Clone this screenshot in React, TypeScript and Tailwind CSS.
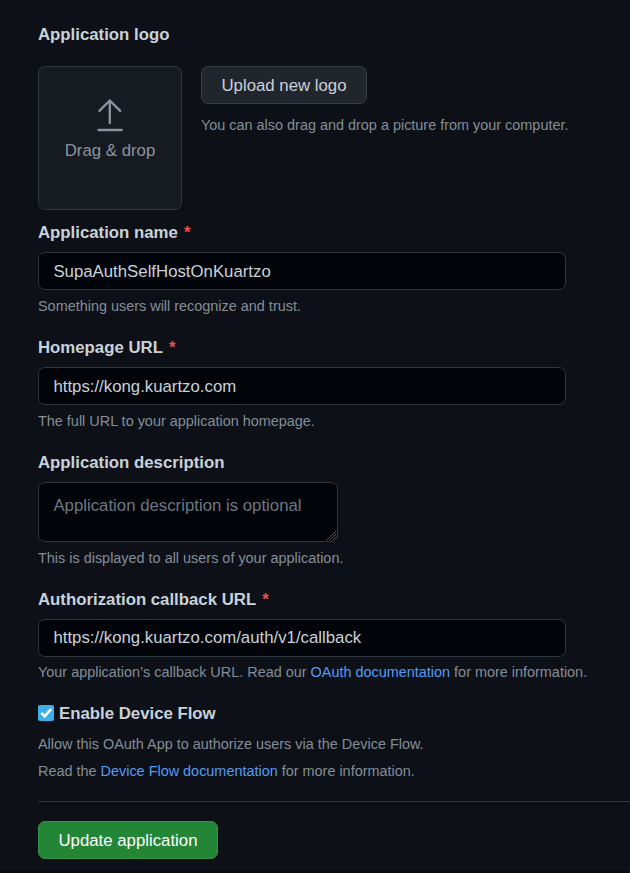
import type { ReactNode } from "react";

function Label({ children, required }: { children: ReactNode; required?: boolean }) {
  return (
    <label className="block h-[25px] text-[16.8px] leading-[25px] font-semibold text-[#c9d1d9]">
      {children}
      {required && <span className="pl-[6px] text-[#f0524a]">*</span>}
    </label>
  );
}

function Note({ children }: { children: ReactNode }) {
  return <p className="h-[22px] text-[14.43px] leading-[22px] whitespace-nowrap text-[#848d97]">{children}</p>;
}

function Field({ label, value, note, tight }: { label: string; value: string; note: ReactNode; tight?: boolean }) {
  return (
    <div>
      <Label required>{label}</Label>
      <input
        className={`mt-[7px] block h-[38px] w-[528px] rounded-[7px] border border-[#30363d] bg-[#010409] px-[14.4px] text-[16.8px] text-[#c9d1d9] outline-none ${tight ? "mb-[4px]" : "mb-[5px] pt-[2px]"}`}
        defaultValue={value}
      />
      <Note>{note}</Note>
    </div>
  );
}

function Link({ children }: { children: ReactNode }) {
  return (
    <a href="#" className="text-[#539bf5]">
      {children}
    </a>
  );
}

export default function App() {
  return (
    <main className="h-[873px] overflow-hidden border-b-2 border-[#090b10] bg-[#0d1117] pt-[22px] pl-[38px] font-['Liberation_Sans',Arial,sans-serif]">
      <Label>Application logo</Label>
      <div className="mt-[19px] flex gap-[19px]">
        <div className="flex size-[144px] flex-col items-center rounded-[7px] border border-[#30363d] bg-[#161b22] pt-[31px] text-[#8b949e]">
          <svg width="28" height="36" viewBox="0 0 28 36" fill="none" stroke="#8b919d" strokeWidth="2.4" strokeLinecap="round" strokeLinejoin="round">
            <path d="M13.8 25V2.5M3.4 12.9 13.8 2.5l10.4 10.4M2.5 32h23.2" />
          </svg>
          <span className="mt-[4px] text-[16.8px] leading-[25px]">Drag &amp; drop</span>
        </div>
        <div>
          <button className="block h-[38px] w-[166px] rounded-[7px] border border-[#363b42] bg-[#21262d] pt-[2px] text-[16.8px] text-[#c9d1d9]">
            Upload new logo
          </button>
          <div className="mt-[10px]">
            <Note>You can also drag and drop a picture from your computer.</Note>
          </div>
        </div>
      </div>

      <div className="mt-[10px] flex flex-col gap-[18px]">
        <Field label="Application name" value="SupaAuthSelfHostOnKuartzo" note="Something users will recognize and trust." />
        <Field label="Homepage URL" value="https://kong.kuartzo.com" note="The full URL to your application homepage." />
        <div>
          <Label>Application description</Label>
          <div className="relative mt-[7px] mb-[5px] w-[300px]">
            <textarea
              className="block h-[60px] w-[300px] resize-none rounded-[7px] border border-[#30363d] bg-[#010409] px-[14.4px] py-[9.6px] text-[16.8px] leading-[25.2px] text-[#c9d1d9] outline-none placeholder:text-[#6e7681]"
              placeholder="Application description is optional"
            />
            <svg className="absolute right-px bottom-px" width="11" height="11" viewBox="0 0 11 11" stroke="#5c6066" strokeWidth="0.9">
              <path d="M0.5 10.5l10-10M3.5 10.5l7-7M6.5 10.5l4-4" />
            </svg>
          </div>
          <Note>This is displayed to all users of your application.</Note>
        </div>
        <Field
          tight
          label="Authorization callback URL"
          value="https://kong.kuartzo.com/auth/v1/callback"
          note={
            <>
              Your application’s callback URL. Read our <Link>OAuth documentation</Link> for more information.
            </>
          }
        />
      </div>

      <div className="mt-[18px] flex items-center gap-[5px]">
        <svg className="mb-px" width="16" height="16" viewBox="0 0 16 16">
          <rect width="16" height="16" rx="2" fill="#3daee9" />
          <path d="M3.4 7.9 6.7 11.4 13.2 4" fill="none" stroke="#fff" strokeWidth="2.6" />
        </svg>
        <Label>Enable Device Flow</Label>
      </div>
      <div className="mt-[7px] flex flex-col gap-[5px]">
        <Note>Allow this OAuth App to authorize users via the Device Flow.</Note>
        <Note>
          Read the <Link>Device Flow documentation</Link> for more information.
        </Note>
      </div>

      <hr className="mt-[19px] border-t border-[#30363d]" />
      <button className="mt-[19px] block h-[38px] w-[180px] rounded-[7px] border border-[#36924a] bg-[#238636] pt-[2px] text-[16.8px] text-white">
        Update application
      </button>
    </main>
  );
}
